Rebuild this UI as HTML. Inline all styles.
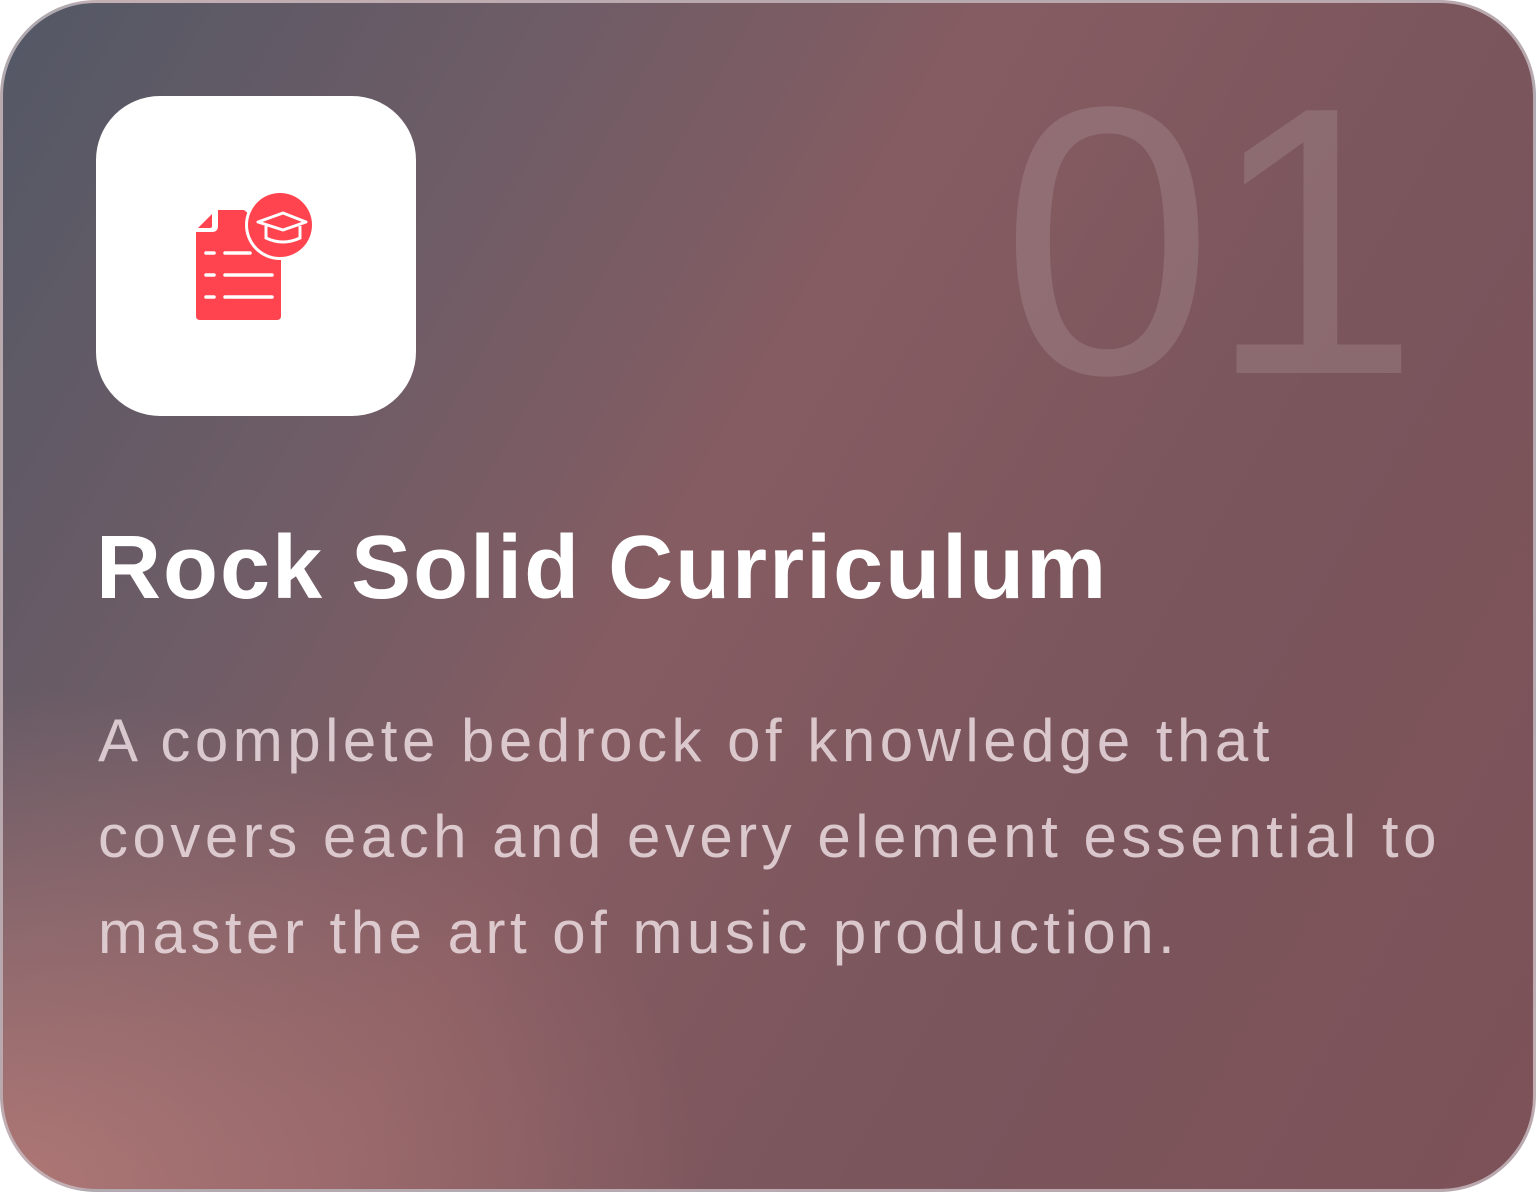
<!DOCTYPE html>
<html><head><style>
html,body{margin:0;padding:0;background:#fff;width:1536px;height:1192px;overflow:hidden}
.card{position:absolute;left:0;top:0;width:1536px;height:1192px;box-sizing:border-box;border-radius:96px;border:3px solid rgba(200,190,195,0.8);
background:
radial-gradient(ellipse 700px 500px at 0% 100%, rgba(178,120,118,0.95), rgba(178,120,118,0) 100%),
linear-gradient(120deg,#535866 0%,#6e5c66 25%,#855c62 45%,#7a555c 70%,#7d5258 100%);overflow:hidden;font-family:"Liberation Sans",sans-serif}
.tile{position:absolute;left:93px;top:93px;width:320px;height:320px;background:#fff;border-radius:64px}
.num{position:absolute;left:998px;top:47px;font-size:382px;line-height:1;color:rgba(255,255,255,0.12);letter-spacing:-6px}
h1{position:absolute;left:93px;top:514px;margin:0;font-size:90px;font-weight:bold;color:#fff;letter-spacing:2px;white-space:nowrap}
p{position:absolute;left:95px;top:690px;margin:0;font-size:60px;line-height:96px;color:rgba(235,220,225,0.85);width:1420px;letter-spacing:4.5px;white-space:nowrap}
</style></head><body>
<div class="card">
<div class="tile">
<svg width="320" height="320" viewBox="96 96 320 320" style="position:absolute;left:0;top:0">
<path d="M218 210 H244 L281 240 V316 Q281 320 277 320 H200 Q196 320 196 316 V232 H212 Q218 232 218 226 Z" fill="#ff444f"/>
<path d="M212 214 V226 Q212 228 210 228 H198 Z" fill="#ff444f"/>
<circle cx="280" cy="225" r="35" fill="#fff"/>
<circle cx="280" cy="225" r="32" fill="#ff444f"/>
<path d="M258 222 L283 213 L306 222 L283 230 Z" fill="none" stroke="#fff" stroke-width="3" stroke-linejoin="round"/>
<path d="M266 226 V238 Q283 246 300 238 V226" fill="none" stroke="#fff" stroke-width="3"/>
<g stroke="#fff" stroke-width="3.5" stroke-linecap="round">
<line x1="206" y1="253" x2="214" y2="253"/><line x1="225" y1="253" x2="250" y2="253"/>
<line x1="206" y1="275" x2="214" y2="275"/><line x1="225" y1="275" x2="272" y2="275"/>
<line x1="206" y1="297" x2="214" y2="297"/><line x1="225" y1="297" x2="272" y2="297"/>
</g>
</svg>
</div>
<div class="num">01</div>
<h1>Rock Solid Curriculum</h1>
<p>A complete bedrock of knowledge that<br>covers each and every element essential to<br>master the art of music production.</p>
</div>
</body></html>
